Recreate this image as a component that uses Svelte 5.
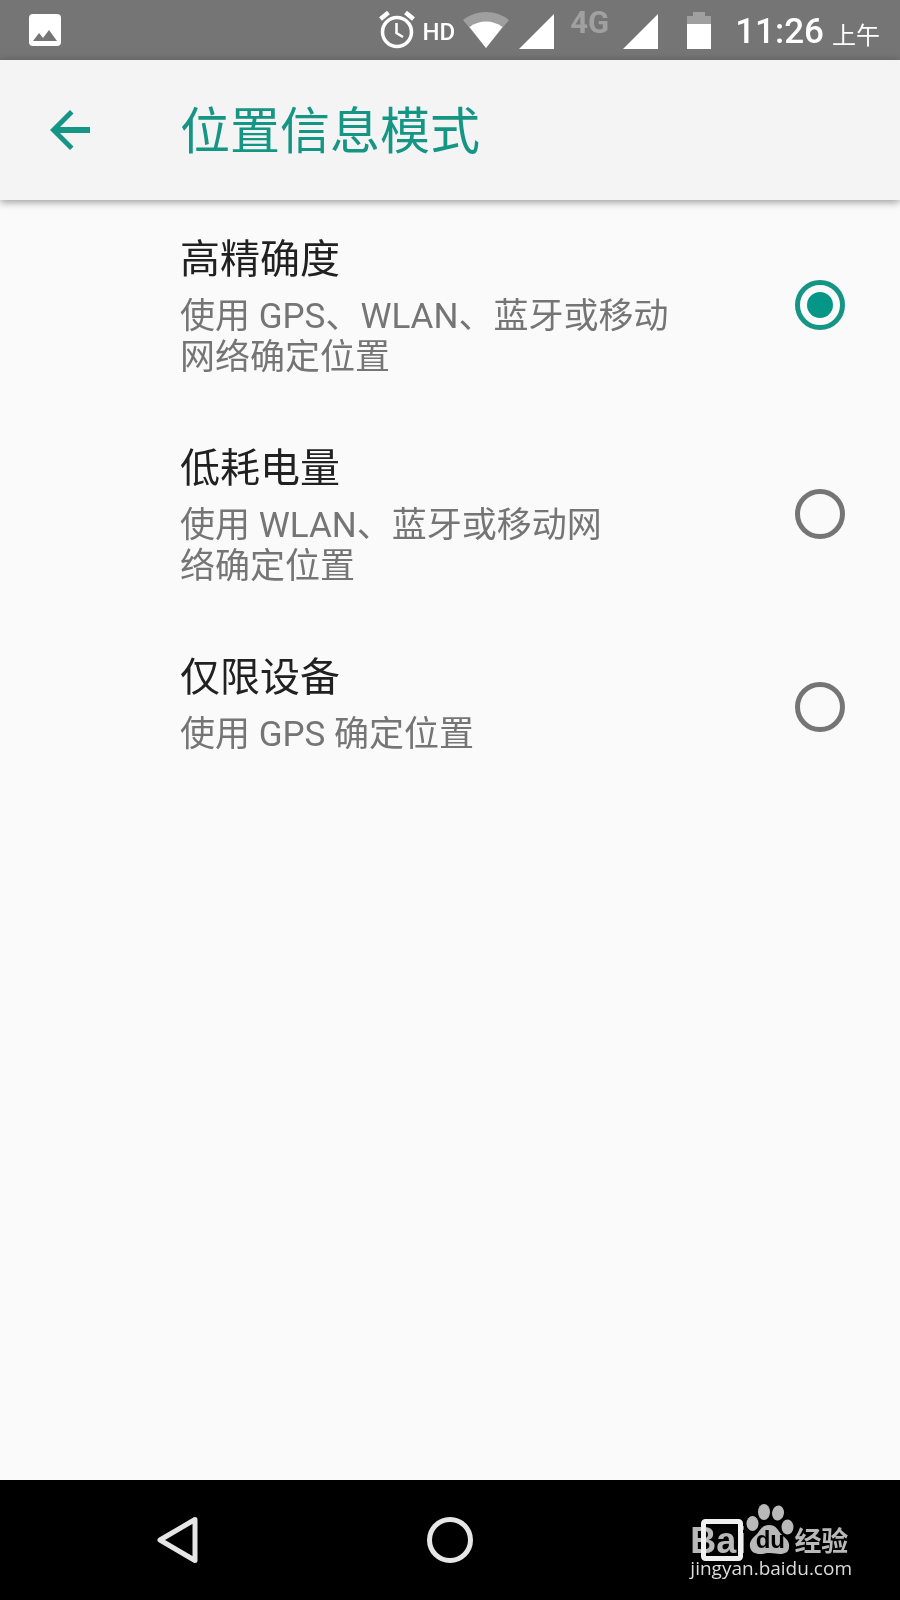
<script lang="ts">
  interface LocationMode {
    id: string;
    title: string;
    summary: string;
  }

  // The modes that can be picked, a line break keeps the summary in two rows
  const modes: LocationMode[] = [
    { id: "high", title: "高精确度", summary: "使用 GPS、WLAN、蓝牙或移动\n网络确定位置" },
    { id: "saving", title: "低耗电量", summary: "使用 WLAN、蓝牙或移动网\n络确定位置" },
    { id: "device", title: "仅限设备", summary: "使用 GPS 确定位置" },
  ];

  // The currently selected mode
  let selected = $state("high");
</script>

<div class="screen">
  <div class="status">
    <svg class="picture" width="32" height="32" viewBox="0 0 32 32">
      <rect width="32" height="32" rx="4" fill="#fff" />
      <path d="M4 27l6-8 4 5 6-8 8 11z" fill="#757575" />
    </svg>
    <svg class="alarm" width="36" height="38" viewBox="0 0 36 38">
      <g fill="none" stroke="#fff">
        <circle cx="18" cy="21" r="14.500" stroke-width="3.500" />
        <path d="M17.500 12v10l6.500 4" stroke-width="2.500" />
        <path d="M1.500 8l8-6.500M26.500 1.500l8 6.500" stroke-width="4.500" />
      </g>
    </svg>
    <span class="hd">HD</span>
    <svg class="wifi" width="46" height="36" viewBox="0 0 46 36">
      <path d="M23 36L0 8Q10 0 23 0T46 8z" fill="#9f9f9f" />
      <path d="M23 36L6.500 15Q14 9.500 23 9.500T39.500 15z" fill="#fff" />
    </svg>
    <svg class="signal" width="35" height="35" viewBox="0 0 35 35">
      <path d="M35 0v35H0z" fill="#fff" />
    </svg>
    <span class="network">4G</span>
    <svg class="signal" width="35" height="35" viewBox="0 0 35 35">
      <path d="M35 0v35H0z" fill="#fff" />
    </svg>
    <svg class="battery" width="24" height="37" viewBox="0 0 24 37">
      <path d="M0 4h6V0h12v4h6v8H0z" fill="#9f9f9f" />
      <path d="M0 12h24v25H0z" fill="#fff" />
    </svg>
    <span class="time">11:26</span>
    <span class="period">上午</span>
  </div>

  <header class="header">
    <button class="back" aria-label="返回">
      <svg width="40" height="40" viewBox="0 0 40 40">
        <path d="M40 17H10L23.500 3.500 20 0 0 20l20 20 3.500-3.500L10 23H40z" fill="#159685" />
      </svg>
    </button>
    <h1>位置信息模式</h1>
  </header>

  <main class="modes">
    {#each modes as mode (mode.id)}
      <label class="mode">
        <span class="text">
          <span class="title">{mode.title}</span>
          <span class="summary">{mode.summary}</span>
        </span>
        <input type="radio" name="mode" value={mode.id} bind:group={selected} />
      </label>
    {/each}
  </main>

  <nav class="nav">
    <button aria-label="后退">
      <svg width="46" height="50" viewBox="0 0 46 50">
        <path d="M40 4.500v41L5 25z" fill="none" stroke="#e6e6e6" stroke-width="5" stroke-linejoin="round" />
      </svg>
    </button>
    <button aria-label="主屏幕">
      <svg width="46" height="46" viewBox="0 0 46 46">
        <circle cx="23" cy="23" r="20.500" fill="none" stroke="#e6e6e6" stroke-width="5" />
      </svg>
    </button>
    <button aria-label="最近">
      <svg width="42" height="42" viewBox="0 0 42 42">
        <rect x="2.500" y="2.500" width="37" height="37" rx="2" fill="none" stroke="#f0f0f0" stroke-width="5" />
      </svg>
    </button>

    <div class="watermark">
      <div class="brand">
        <span class="ba">Bai</span>
        <span class="paw">
          <svg width="48" height="50" viewBox="0 0 48 50">
            <g fill="#b9b9b9">
              <ellipse cx="6.500" cy="19.500" rx="6" ry="7.500" />
              <ellipse cx="18" cy="8" rx="6" ry="8" />
              <ellipse cx="32" cy="9" rx="6" ry="7.500" transform="rotate(8 32 9)" />
              <ellipse cx="41.500" cy="23" rx="6" ry="7.500" />
              <path d="M23 21c-7 0-9 5-12 9-4 4-8 7-7 13 1 5 5 7 10 7 4 0 6-1 10-1s6 1 10 1c5 0 9-2 9-7 1-6-4-9-8-13-3-4-5-9-12-9z" />
            </g>
          </svg>
          <span class="du">du</span>
        </span>
        <span class="jingyan">经验</span>
      </div>
      <div class="url">jingyan.baidu.com</div>
    </div>
  </nav>
</div>

<style>
  :global(body) {
    margin: 0;
    background: #fafafa;
  }

  .screen {
    display: flex;
    flex-direction: column;
    min-height: 100vh;
    font-family: Roboto, "Noto Sans CJK SC", sans-serif;
    color: #212121;
  }

  svg {
    display: block;
    flex: none;
  }

  button {
    display: flex;
    align-items: center;
    justify-content: center;
    padding: 0;
    border: none;
    background: none;
    cursor: pointer;
  }

  .status {
    display: flex;
    align-items: center;
    height: 60px;
    padding: 0 20px 0 29px;
    background: #757575;
    color: #fff;
    white-space: nowrap;
  }

  .picture {
    margin-right: auto;
  }

  .hd {
    margin: 4px 8px 0 8px;
    font-size: 24px;
    line-height: 32px;
    font-weight: 500;
  }

  .signal {
    margin-top: 3px;
  }

  .wifi {
    margin-right: 10px;
  }

  .network {
    margin: 0 14px 14px 16px;
    font-size: 31px;
    line-height: 32px;
    font-weight: 700;
    color: #a0a0a0;
  }

  .battery {
    margin: 0 24px 0 29px;
  }

  .time {
    margin-top: 4px;
    font-size: 35px;
    line-height: 40px;
    font-weight: 500;
  }

  .period {
    margin: 12px 0 0 8px;
    font-size: 24px;
    line-height: 32px;
    font-weight: 400;
  }

  .header {
    display: flex;
    align-items: center;
    height: 140px;
    padding-left: 50px;
    background: #f4f4f4;
    box-shadow: 0 2px 8px rgba(0, 0, 0, 0.4);
  }

  h1 {
    margin: 4px 0 0 90px;
    font-size: 50px;
    line-height: 60px;
    font-weight: 400;
    color: #159685;
  }

  .modes {
    flex: 1;
  }

  .mode {
    display: flex;
    align-items: center;
    justify-content: space-between;
    box-sizing: border-box;
    min-height: 178px;
    padding: 0 55px 0 180px;
    cursor: pointer;
  }

  .text {
    align-self: flex-start;
    padding: 36px 0 31px;
  }

  .title,
  .summary {
    display: block;
  }

  .title {
    margin-bottom: 12px;
    font-size: 40px;
    line-height: 48px;
  }

  .summary {
    font-size: 35px;
    line-height: 41px;
    color: #757575;
    white-space: pre-line;
  }

  input {
    flex: none;
    appearance: none;
    width: 50px;
    height: 50px;
    margin: 0;
    border: 5px solid #757575;
    border-radius: 50%;
  }

  input:checked {
    border-color: #159685;
    padding: 7px;
    background: #069688 content-box;
  }

  .nav {
    position: relative;
    display: flex;
    height: 120px;
    padding: 0 42px;
    background: #000;
  }

  .nav button {
    flex: 1;
  }

  .watermark {
    position: absolute;
    right: 48px;
    bottom: 18px;
    color: #b9b9b9;
    pointer-events: none;
    mix-blend-mode: lighten;
  }

  .brand {
    display: flex;
    align-items: flex-end;
    height: 50px;
  }

  .ba {
    font-family: "Liberation Sans", sans-serif;
    font-size: 36px;
    line-height: 26px;
    font-weight: 700;
  }

  .paw {
    position: relative;
  }

  .du {
    position: absolute;
    inset: auto 0 2px;
    text-align: center;
    font-family: "Liberation Sans", sans-serif;
    font-size: 24px;
    line-height: 24px;
    font-weight: 700;
    color: #000;
  }

  .jingyan {
    font-size: 27px;
    line-height: 24px;
    font-weight: 700;
  }

  .url {
    font-family: "Open Sans", sans-serif;
    font-size: 19px;
    line-height: 28px;
    color: #dcdcdc;
  }
</style>
